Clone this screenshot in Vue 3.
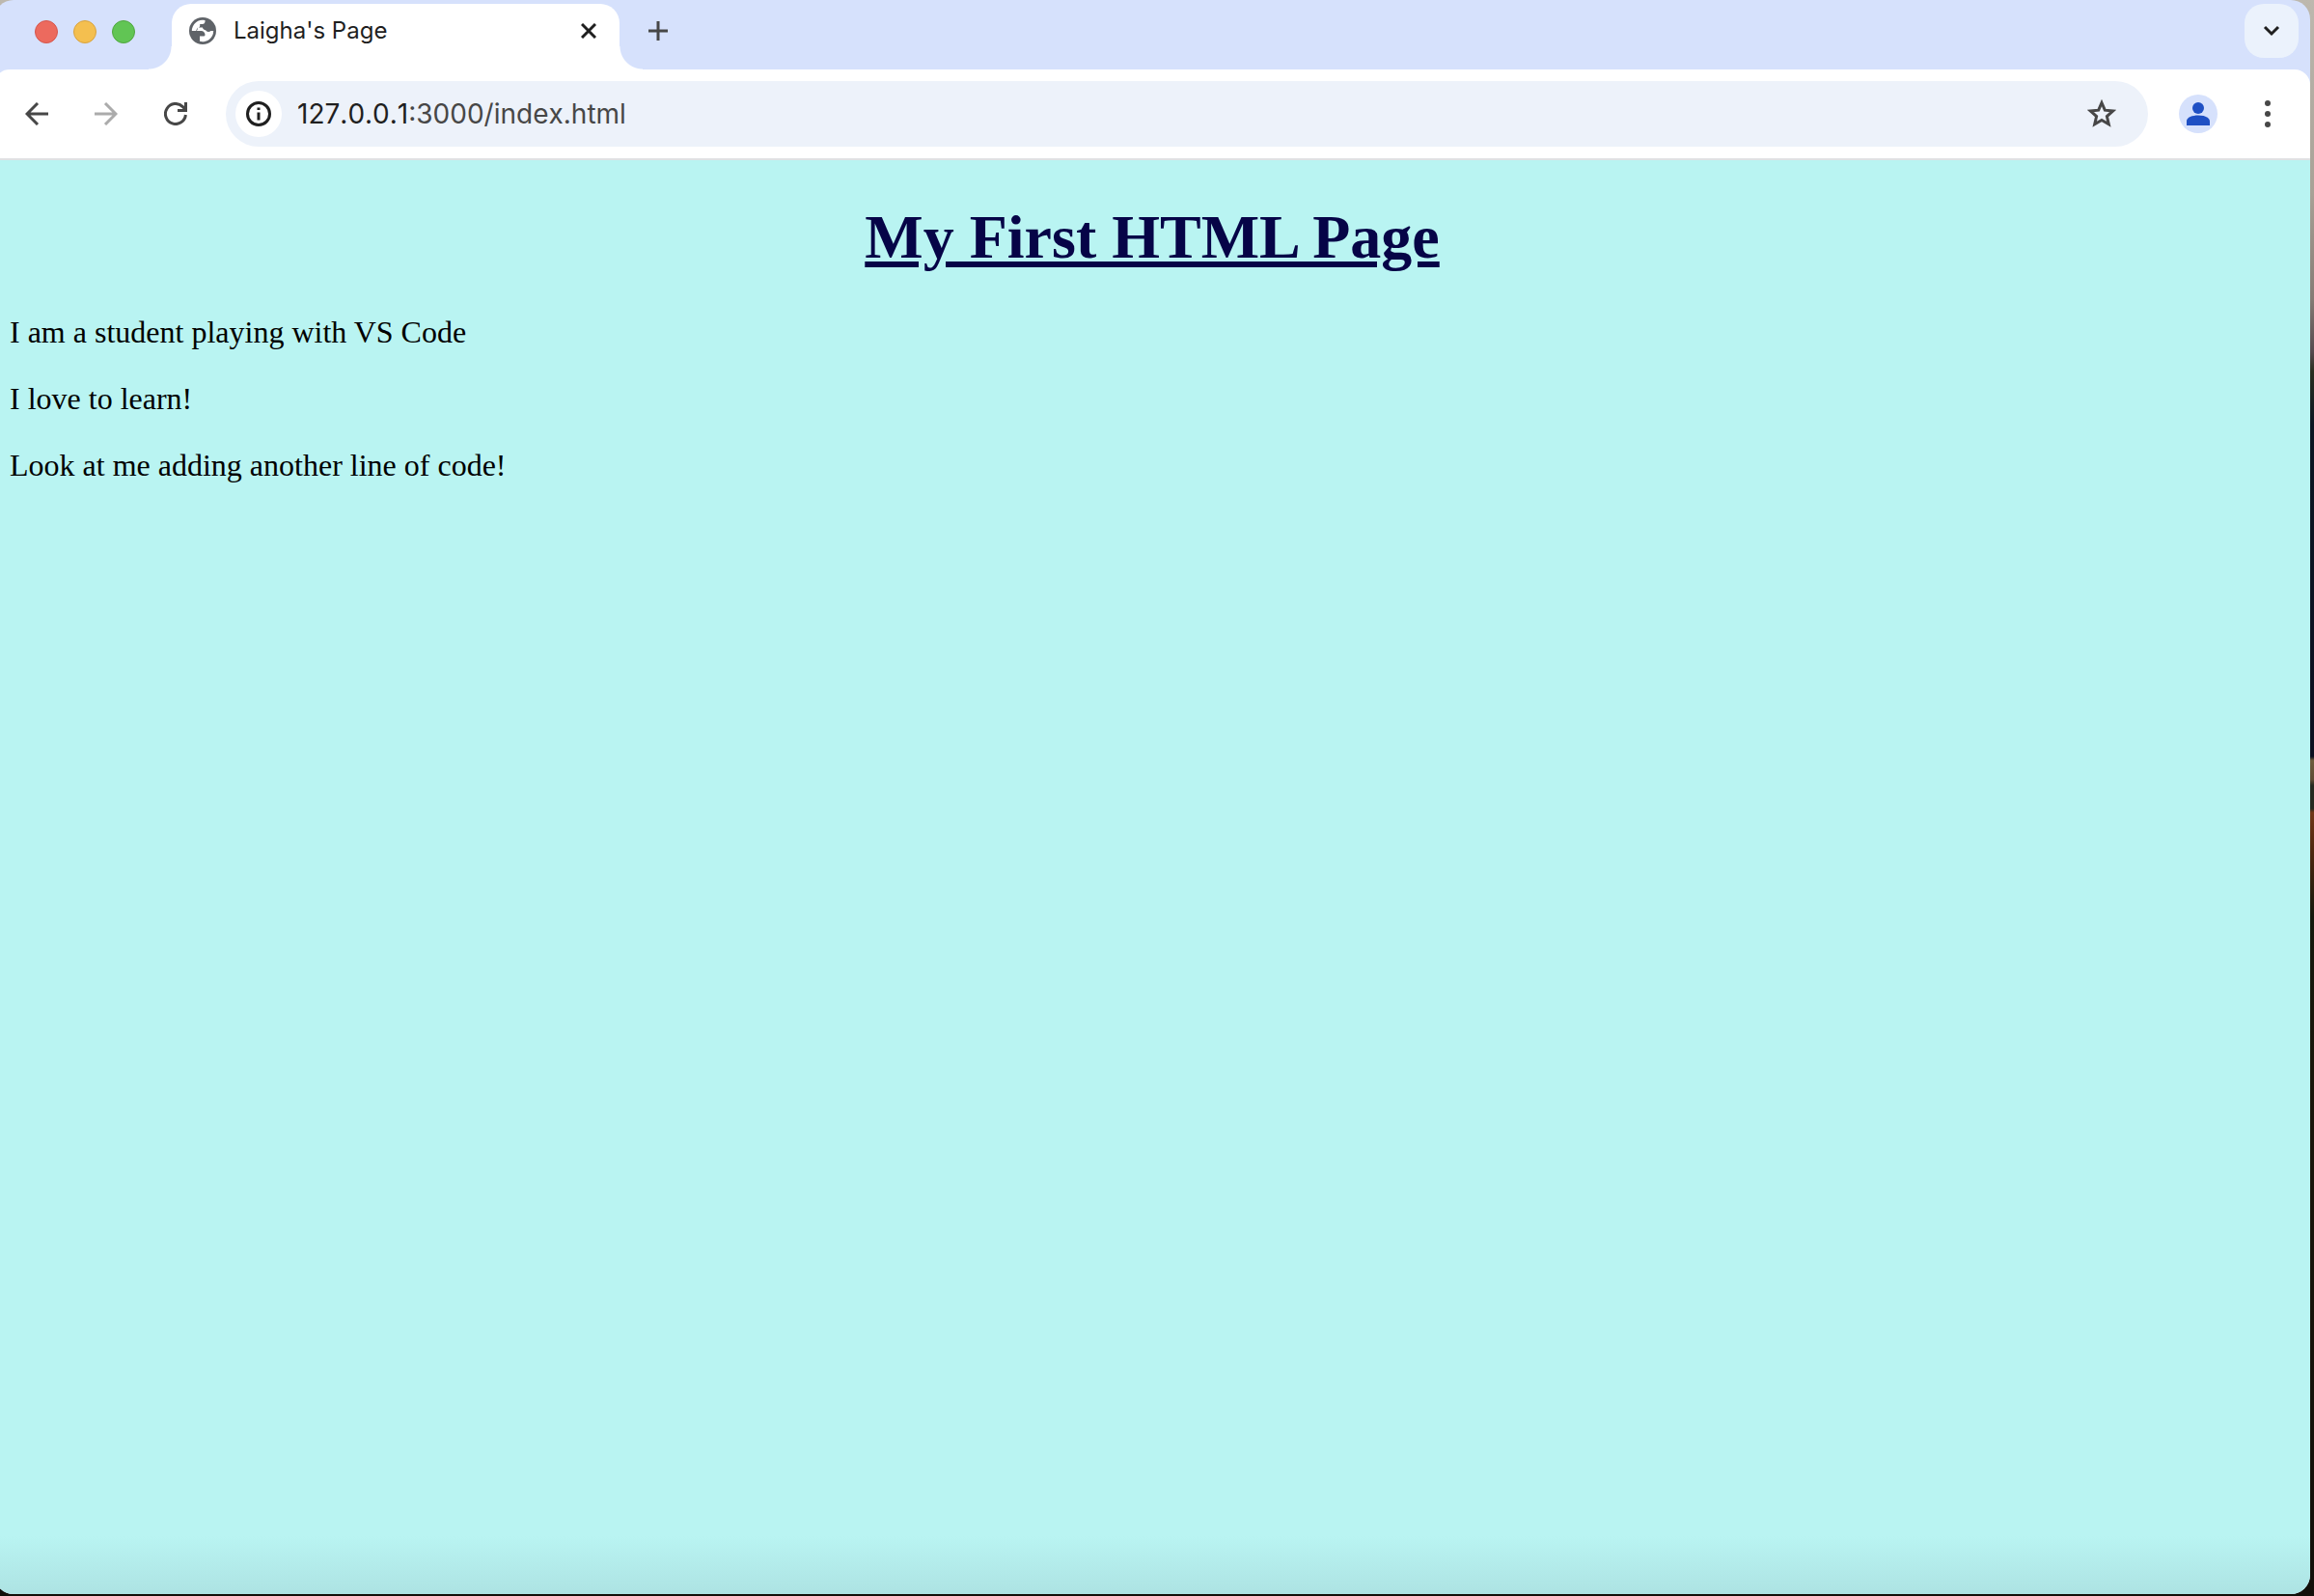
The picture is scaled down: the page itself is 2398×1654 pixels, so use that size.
<script setup>
import { ref } from 'vue'

const title = "Laigha's Page"
const host = '127.0.0.1'
const path = ':3000/index.html'
const paragraphs = ref([
  'I am a student playing with VS Code',
  'I love to learn!',
  'Look at me adding another line of code!',
])
</script>

<template>
  <div class="desktop">
    <div class="window">
      <header class="tab-strip">
        <div class="lights">
          <button class="light red" aria-label="Close window"></button>
          <button class="light yellow" aria-label="Minimize window"></button>
          <button class="light green" aria-label="Zoom window"></button>
        </div>
        <div class="tab">
          <svg class="globe" viewBox="0 0 28 28" aria-hidden="true">
            <circle cx="14" cy="14" r="14" fill="#5f6368" />
            <path fill="#fff" d="M2.800 14A11.200 11.200 0 0 1 16.500 3.100V4.200C16.500 5.700 15.300 7 13.800 7H11.200V8.400C11.200 9.800 10.200 10.500 8.800 10.500V11.500C8.800 12.600 8.200 14 7 14ZM7 14H12.500C14.800 14 16.500 15.800 16.500 18C16.500 19.200 15.800 19.600 14.500 19.600H11V24.800A11.200 11.200 0 0 0 25.200 14H22.500C21.200 15.400 18.800 15.400 17.800 14C17 12.800 14 12.800 14 10.500L8.800 10.500Z" />
          </svg>
          <span class="tab-title">{{ title }}</span>
          <button class="icon-button close" aria-label="Close tab">
            <svg width="16" height="16" viewBox="0 0 16 16"><path d="M1 1L15 15M15 1L1 15" stroke="#1f1f1f" stroke-width="3" /></svg>
          </button>
        </div>
        <button class="icon-button new-tab" aria-label="New tab">
          <svg width="20" height="20" viewBox="0 0 20 20"><path d="M0 10H20M10 0V20" stroke="#474747" stroke-width="3" /></svg>
        </button>
        <button class="icon-button tab-search" aria-label="Search tabs">
          <svg width="18" height="12" viewBox="0 0 18 12"><path d="M2 2L9 9L16 2" fill="none" stroke="#1f1f1f" stroke-width="3" /></svg>
        </button>
      </header>

      <nav class="toolbar">
        <button class="icon-button nav-button" aria-label="Back">
          <svg width="24" height="24" viewBox="0 0 24 24"><path d="M24 12H2M13 1L2 12L13 23" fill="none" stroke="#474747" stroke-width="3" /></svg>
        </button>
        <button class="icon-button nav-button" aria-label="Forward" disabled>
          <svg width="24" height="24" viewBox="0 0 24 24"><path d="M0 12H22M11 1L22 12L11 23" fill="none" stroke="#ababab" stroke-width="3" /></svg>
        </button>
        <button class="icon-button nav-button" aria-label="Reload">
          <svg width="24" height="24" viewBox="0 0 24 24"><path d="M22.400 13A10.500 10.500 0 1 1 19.400 4.600L22.500 7.700M22.500 0V8.500H14" fill="none" stroke="#474747" stroke-width="3" /></svg>
        </button>
        <div class="omnibox">
          <button class="icon-button site-info" aria-label="View site information">
            <svg width="26" height="26" viewBox="0 0 26 26"><circle cx="13" cy="13" r="11.500" fill="none" stroke="#1f1f1f" stroke-width="3" /><path d="M13 11.500V19.500M13 6.500V9" stroke="#1f1f1f" stroke-width="3" /></svg>
          </button>
          <a class="url" href="#">{{ host }}<span class="path">{{ path }}</span></a>
          <button class="icon-button star" aria-label="Bookmark this tab">
            <svg width="30" height="30" viewBox="0 0 30 30"><path d="M15 3.500L18.300 11.200L26.700 12L20.400 17.500L22.300 25.700L15 21.400L7.700 25.700L9.600 17.500L3.300 12L11.700 11.200Z" fill="none" stroke="#474747" stroke-width="3" /></svg>
          </button>
        </div>
        <button class="icon-button avatar" aria-label="Profile">
          <svg width="24" height="24" viewBox="0 0 24 24"><circle cx="12" cy="6" r="6" fill="#1f50c4" /><path d="M0 24V19.500C0 15.500 6 13.500 12 13.500S24 15.500 24 19.500V24Z" fill="#1f50c4" /></svg>
        </button>
        <button class="icon-button menu" aria-label="Menu">
          <svg width="6" height="28" viewBox="0 0 6 28" fill="#474747"><circle cx="3" cy="3" r="3" /><circle cx="3" cy="14" r="3" /><circle cx="3" cy="25" r="3" /></svg>
        </button>
      </nav>

      <main class="page">
        <h1>My First HTML Page</h1>
        <p v-for="text in paragraphs" :key="text">{{ text }}</p>
      </main>
    </div>
  </div>
</template>

<style>
body {
  overflow: hidden;
}
</style>

<style scoped>
.desktop {
  box-sizing: border-box;
  min-height: 100vh;
  display: flex;
  padding: 0 4px 2px 0;
  background: linear-gradient(#bdb8ae, #a8a196 200px, #857b74 310px, #554a4e 365px, #2a2f20 385px, #0c1622 440px, #0b1020 784px, #6e5c3c 788px, #5e4c34 808px, #252a20 814px, #252a20 838px, #703818 842px, #50280f 880px, #14190d 950px, #1a160a 1100px, #12100a);
}
.window {
  flex: 1;
  display: flex;
  flex-direction: column;
  margin-left: -6px;
  overflow: hidden;
  border-radius: 20px;
  background: #d6e1fc;
}
.icon-button {
  display: flex;
  align-items: center;
  justify-content: center;
  flex: none;
  padding: 0;
  border: 0;
  background: none;
}
.tab-strip {
  display: flex;
  box-sizing: border-box;
  height: 72px;
  padding: 4px 12px 0 42px;
}
.lights {
  display: flex;
  gap: 16px;
  padding-top: 17px;
}
.light {
  width: 24px;
  height: 24px;
  padding: 0;
  border: 1px solid;
  border-radius: 50%;
}
.red { background: #ec6a5e; border-color: #d5564c; }
.yellow { background: #f4bf4f; border-color: #d8a23e; }
.green { background: #61c554; border-color: #50a73f; }
.tab {
  position: relative;
  display: flex;
  align-items: center;
  box-sizing: border-box;
  width: 464px;
  margin-left: 38px;
  padding: 0 20px 12px 18px;
  border-radius: 20px 20px 0 0;
  background: #fff;
}
.tab::before,
.tab::after {
  content: '';
  position: absolute;
  bottom: 0;
  width: 24px;
  height: 24px;
}
.tab::before {
  right: 100%;
  background: radial-gradient(circle at 0 0, transparent 23px, #fff 24px);
}
.tab::after {
  left: 100%;
  background: radial-gradient(circle at 100% 0, transparent 23px, #fff 24px);
}
.globe {
  width: 28px;
  height: 28px;
}
.tab-title {
  flex: 1;
  margin-left: 18px;
  font: 24px/32px Inter, sans-serif;
  color: #1f1f1f;
}
.close {
  width: 24px;
  height: 24px;
}
.new-tab {
  width: 56px;
  height: 56px;
  margin-left: 12px;
}
.tab-search {
  width: 56px;
  height: 56px;
  margin-left: auto;
  border-radius: 20px;
  background: #ebf2fc;
}
.toolbar {
  display: flex;
  align-items: center;
  box-sizing: border-box;
  height: 94px;
  padding: 0 16px;
  border-bottom: 2px solid #e0e1e3;
  border-radius: 16px 16px 0 0;
  background: #fff;
}
.nav-button {
  width: 56px;
  height: 56px;
  margin-right: 16px;
}
.omnibox {
  flex: 1;
  display: flex;
  align-items: center;
  height: 68px;
  margin-left: 8px;
  padding: 0 33px 0 10px;
  border-radius: 34px;
  background: #edf2fa;
}
.site-info {
  width: 48px;
  height: 48px;
  border-radius: 50%;
  background: #fff;
}
.url {
  flex: 1;
  margin-left: 16px;
  font: 28px/36px Inter, sans-serif;
  font-kerning: none;
  color: #1f1f1f;
  text-decoration: none;
}
.path {
  color: #474747;
}
.avatar {
  width: 40px;
  height: 40px;
  margin-left: 32px;
  border-radius: 50%;
  background: #d6e1fc;
}
.menu {
  width: 56px;
  height: 56px;
  margin-left: 24px;
}
.page {
  flex: 1;
  padding: 43px 16px 16px;
  background: linear-gradient(to top, #ade3e3, #b9f4f2 60px);
  font: 32px/37px "Liberation Serif", serif;
  color: #000;
}
h1 {
  margin: 0 0 43px;
  font-size: 64px;
  line-height: 74px;
  text-align: center;
  color: #060447;
  text-decoration: underline;
}
p {
  margin: 0 0 32px;
}
</style>
